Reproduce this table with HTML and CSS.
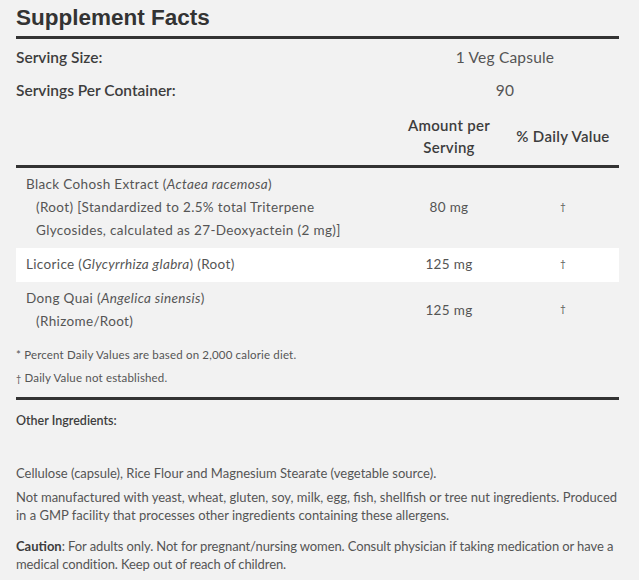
FILE: index.html
```html
<!DOCTYPE html>
<html>
<head>
<meta charset="utf-8">
<link rel="stylesheet" href="styles.css">
</head>
<body>
<div class="panel">
  <h1 class="title">Supplement Facts</h1>
  <div class="rule"></div>
  <div class="facts">
    <div class="row serving">
      <div class="label">Serving Size:</div>
      <div class="value">1 Veg Capsule</div>
    </div>
    <div class="row serving">
      <div class="label">Servings Per Container:</div>
      <div class="value">90</div>
    </div>
    <div class="row head">
      <div></div>
      <div class="amt">Amount per<br>Serving</div>
      <div class="dv">% Daily Value</div>
    </div>
  </div>
  <div class="rule"></div>
  <div class="ingredients">
    <div class="irow">
      <div class="name">Black Cohosh Extract (<i>Actaea racemosa</i>)<span class="sub">(Root) [Standardized to 2.5% total Triterpene Glycosides, calculated as 27-Deoxyactein (2 mg)]</span></div>
      <div class="amt">80 mg</div>
      <div class="dv">†</div>
    </div>
    <div class="irow alt">
      <div class="name">Licorice (<i>Glycyrrhiza glabra</i>) (Root)</div>
      <div class="amt">125 mg</div>
      <div class="dv">†</div>
    </div>
    <div class="irow">
      <div class="name">Dong Quai (<i>Angelica sinensis</i>)<span class="sub">(Rhizome/Root)</span></div>
      <div class="amt">125 mg</div>
      <div class="dv">†</div>
    </div>
  </div>
  <div class="notes">
    <p>* Percent Daily Values are based on 2,000 calorie diet.</p>
    <p><span class="dagger">†</span> Daily Value not established.</p>
  </div>
  <div class="rule"></div>
  <div class="other-head">Other Ingredients:</div>
  <div class="other">
    <p>Cellulose (capsule), Rice Flour and Magnesium Stearate (vegetable source).</p>
    <p>Not manufactured with yeast, wheat, gluten, soy, milk, egg, fish, shellfish or tree nut ingredients. Produced in a GMP facility that processes other ingredients containing these allergens.</p>
    <p class="caution"><b>Caution</b>: For adults only. Not for pregnant/nursing women. Consult physician if taking medication or have a medical condition. Keep out of reach of children.</p>
  </div>
</div>
</body>
</html>
```

FILE: styles.css
```css
html, body {
  margin: 0;
  padding: 0;
  background: #f2f2f2;
}
body {
  font-family: Lato, "Noto Sans", sans-serif;
  color: #555;
}
.panel {
  width: 603px;
  margin-left: 16px;
}
.title {
  margin: 0;
  padding-top: 3px;
  height: 33px;
  font-family: "Liberation Sans", Arial, sans-serif;
  font-weight: bold;
  font-size: 22.5px;
  line-height: 30px;
  color: #333;
}
.rule {
  height: 3px;
  background: #333;
}
.facts {
  display: grid;
  grid-template-columns: 1fr;
  padding-top: 1px;
}
.row {
  display: grid;
  grid-template-columns: 1fr 228px;
  align-items: center;
}
.serving {
  height: 33px;
  font-size: 15.5px;
  font-weight: 600;
  color: #3d3d3d;
}
.serving .value {
  text-align: center;
  font-weight: 400;
  color: #555;
  letter-spacing: 0.2px;
}
.head {
  grid-template-columns: 1fr 116px 112px;
  padding: 8px 0 7px;
  font-size: 15px;
  letter-spacing: 0.3px;
  line-height: 22px;
  font-weight: 600;
  color: #3d3d3d;
  text-align: center;
}
.ingredients {
  font-size: 13.5px;
  letter-spacing: 0.35px;
  line-height: 23px;
}
.irow {
  display: grid;
  grid-template-columns: 1fr 116px 112px;
  align-items: center;
  padding: 5px 0 6px;
}
.irow.alt {
  background: #fff;
}
.irow .name {
  padding-left: 10px;
  padding-right: 20px;
}
.irow .sub {
  display: block;
  padding-left: 10px;
}
.irow .amt {
  text-align: center;
}
.irow .dv {
  text-align: center;
  font-size: 10px;
  line-height: 18px;
  padding-bottom: 4px;
}
.notes {
  padding-top: 4px;
  padding-bottom: 7px;
  font-size: 11.5px;
  letter-spacing: 0.17px;
  line-height: 23px;
}
.notes p {
  margin: 0;
}
.dagger {
  font-size: 9px;
}
.other-head {
  padding-top: 11px;
  font-size: 12.5px;
  font-weight: 600;
  color: #3d3d3d;
  line-height: 20px;
}
.other {
  padding-top: 33px;
  font-size: 13px;
  line-height: 18px;
}
.other p {
  margin: 0 0 6px;
}
.other .caution {
  margin-top: 13px;
  letter-spacing: -0.1px;
}
.other b {
  color: #3d3d3d;
  font-weight: 700;
  letter-spacing: 0;
}
```
